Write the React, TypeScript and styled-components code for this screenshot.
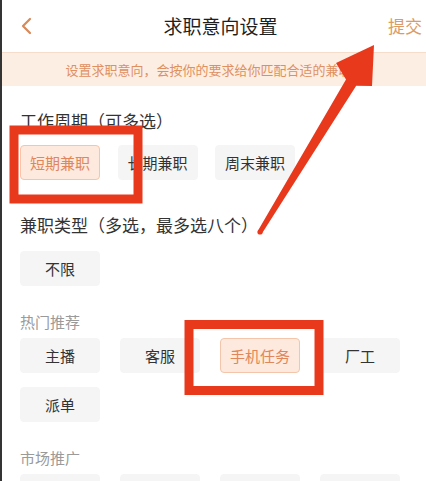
import React from "react";
import styled, { createGlobalStyle, css } from "styled-components";

const GlobalStyle = createGlobalStyle`
  html, body { margin: 0; padding: 0; background: #ffffff; }
  body {
    font-family: "Noto Sans CJK SC", "Noto Sans", sans-serif;
    -webkit-font-smoothing: antialiased;
  }
`;

const Page = styled.div`
  position: relative;
  display: flex;
  width: 426px;
  height: 481px;
  overflow: hidden;
  background: #ffffff;
`;

const LeftStrip = styled.div`
  width: 2px;
  flex: none;
  background: #343434;
`;

const Screen = styled.div`
  flex: 1;
  display: flex;
  flex-direction: column;
  min-width: 0;
  & > * { flex-shrink: 0; }
`;

const Header = styled.header`
  height: 52px;
  display: flex;
  align-items: center;
  padding: 0 4px 0 18px;
`;

const BackButton = styled.span`
  display: flex;
  width: 14px;
  height: 18px;
  align-items: center;
`;

const Title = styled.h1`
  flex: 1;
  margin: 0;
  padding-left: 19px;
  text-align: center;
  font-size: 19px;
  line-height: 26px;
  font-weight: 400;
  color: #1f1f1f;
`;

const Submit = styled.span`
  font-size: 17px;
  line-height: 24px;
  color: #dc9b66;
`;

const Banner = styled.div`
  height: 33px;
  display: flex;
  align-items: center;
  justify-content: center;
  padding-right: 11px;
  background: #fdeee3;
  border-top: 1px solid #f6dccb;
  font-size: 13px;
  color: #df9061;
`;

const Body = styled.main`
  display: flex;
  flex-direction: column;
  padding: 0 18px;
  & > * { flex-shrink: 0; }
`;

const SectionTitle = styled.h2<{ $top: number }>`
  margin: ${(p) => p.$top}px 0 0;
  font-size: 17px;
  line-height: 22px;
  font-weight: 400;
  color: #333333;
`;

const GroupTitle = styled.h3<{ $top: number }>`
  margin: ${(p) => p.$top}px 0 0;
  font-size: 15px;
  line-height: 21px;
  font-weight: 400;
  color: #9a9a9a;
`;

const ChipGrid = styled.div<{ $top: number; $gap: number }>`
  margin-top: ${(p) => p.$top}px;
  display: grid;
  grid-template-columns: repeat(4, 80px);
  column-gap: ${(p) => p.$gap}px;
  row-gap: 14px;
`;

const Chip = styled.div<{ $active?: boolean }>`
  box-sizing: border-box;
  height: 35px;
  display: flex;
  align-items: center;
  justify-content: center;
  border-radius: 4px;
  background: #f5f5f5;
  border: 1px solid #f5f5f5;
  font-size: 15px;
  color: #333333;
  ${(p) =>
    p.$active &&
    css`
      background: #fde9dd;
      border-color: #f3c5aa;
      color: #e0865a;
    `}
`;

const Annotations = styled.svg`
  position: absolute;
  left: 0;
  top: 0;
  width: 426px;
  height: 481px;
  pointer-events: none;
`;

const RED = "#e8391d";

type ChipItem = { key: string; label?: string; active?: boolean };

const ChipRow: React.FC<{ items: ChipItem[]; top: number; gap: number }> = ({
  items,
  top,
  gap,
}) => (
  <ChipGrid $top={top} $gap={gap}>
    {items.map((it) => (
      <Chip key={it.key} $active={it.active}>
        {it.label}
      </Chip>
    ))}
  </ChipGrid>
);

const chip = (label: string, active?: boolean): ChipItem => ({ key: label, label, active });

export default function App() {
  return (
    <>
      <GlobalStyle />
      <Page>
        <LeftStrip />
        <Screen>
          <Header>
            <BackButton>
              <svg width="12" height="18" viewBox="0 0 12 18">
                <path
                  d="M10 2 L3 9 L10 16"
                  fill="none"
                  stroke="#d9885a"
                  strokeWidth="2.2"
                  strokeLinecap="round"
                  strokeLinejoin="round"
                />
              </svg>
            </BackButton>
            <Title>求职意向设置</Title>
            <Submit>提交</Submit>
          </Header>
          <Banner>设置求职意向，会按你的要求给你匹配合适的兼职</Banner>
          <Body>
            <SectionTitle $top={24}>工作周期（可多选）</SectionTitle>
            <ChipRow
              top={13}
              gap={17.5}
              items={[chip("短期兼职", true), chip("长期兼职"), chip("周末兼职")]}
            />
            <SectionTitle $top={34}>兼职类型（多选，最多选八个）</SectionTitle>
            <ChipRow top={15} gap={20} items={[chip("不限")]} />
            <GroupTitle $top={25}>热门推荐</GroupTitle>
            <ChipRow
              top={6}
              gap={20}
              items={[
                chip("主播"),
                chip("客服"),
                chip("手机任务", true),
                chip("厂工"),
                chip("派单"),
              ]}
            />
            <GroupTitle $top={25}>市场推广</GroupTitle>
            <ChipRow
              top={6}
              gap={20}
              items={[{ key: "m1" }, { key: "m2" }, { key: "m3" }, { key: "m4" }]}
            />
          </Body>
        </Screen>
        <Annotations viewBox="0 0 426 481">
          <rect x="14" y="130" width="124" height="69" fill="none" stroke={RED} strokeWidth="9" />
          <rect x="189" y="324.5" width="130" height="66" fill="none" stroke={RED} strokeWidth="9" />
          <circle cx="260" cy="232" r="2.6" fill={RED} />
          <polygon
            fill={RED}
            points="257.9,230.7 346,79.5 336,63 374,45 372,86 356.2,85.7 262.1,233.3"
          />
        </Annotations>
      </Page>
    </>
  );
}
